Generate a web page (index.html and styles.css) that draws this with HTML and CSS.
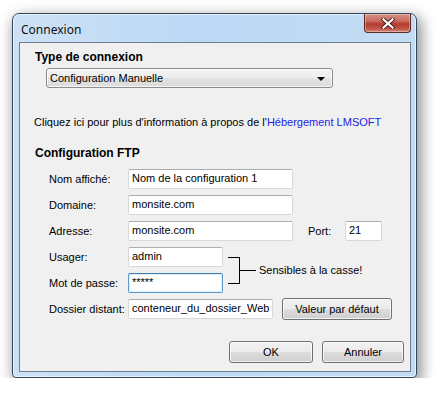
FILE: index.html
```html
<!DOCTYPE html>
<html>
<head>
<meta charset="utf-8">
<link rel="stylesheet" href="styles.css">
</head>
<body>
<div class="window">
  <div class="titlebar">
    <span class="title">Connexion</span>
    <div class="close">
      <svg width="14" height="11" viewBox="0 0 14 11">
        <path d="M2.5 1.5 L11.5 9.5 M11.5 1.5 L2.5 9.5" stroke="#4a1c18" stroke-width="4" stroke-linecap="square" fill="none"/>
        <path d="M2.5 1.5 L11.5 9.5 M11.5 1.5 L2.5 9.5" stroke="#ffffff" stroke-width="2.2" stroke-linecap="square" fill="none"/>
      </svg>
    </div>
  </div>
  <div class="client">
    <div class="heading h1">Type de connexion</div>
    <div class="select">
      <span>Configuration Manuelle</span>
      <span class="arrow"></span>
    </div>
    <p class="info">Cliquez ici pour plus d'information à propos de l'<a class="link">Hébergement LMSOFT</a></p>
    <div class="heading h2">Configuration FTP</div>
    <div class="form">
      <div class="row">
        <span class="label">Nom affiché:</span>
        <div class="input w165">Nom de la configuration 1</div>
      </div>
      <div class="row">
        <span class="label">Domaine:</span>
        <div class="input w165">monsite.com</div>
      </div>
      <div class="row">
        <span class="label">Adresse:</span>
        <div class="input w165">monsite.com</div>
        <span class="port-label">Port:</span>
        <div class="input w37">21</div>
      </div>
      <div class="cred">
        <div class="cred-rows">
          <div class="row">
            <span class="label">Usager:</span>
            <div class="input w95">admin</div>
          </div>
          <div class="row">
            <span class="label">Mot de passe:</span>
            <div class="input w95 focus">*****</div>
          </div>
        </div>
        <div class="bracket"></div>
        <div class="tick"></div>
        <span class="note">Sensibles à la casse!</span>
      </div>
      <div class="row">
        <span class="label">Dossier distant:</span>
        <div class="input w145">conteneur_du_dossier_Web</div>
        <div class="btn default">Valeur par défaut</div>
      </div>
    </div>
    <div class="actions">
      <div class="btn ok">OK</div>
      <div class="btn cancel">Annuler</div>
    </div>
  </div>
</div>
</body>
</html>
```

FILE: styles.css
```css
* { box-sizing: border-box; }
html, body { margin: 0; background: #ffffff; }
body {
  padding: 13px 0 0 12px;
  font-family: "Liberation Sans", Arial, sans-serif;
  font-size: 11px;
  color: #000;
}
.window {
  width: 405px;
  height: 365px;
  border: 1px solid #34465a;
  border-radius: 7px 7px 4px 4px;
  background: linear-gradient(to right, #cde1f5 0%, #bcd9f6 45%, #c3dcf4 100%);
  box-shadow: 3px 5px 14px 2px rgba(0,0,0,0.42), inset 0 0 0 1px rgba(255,255,255,0.6);
  padding: 0 5px 5px 6px;
  display: flex;
  flex-direction: column;
}
.titlebar {
  height: 28px;
  display: flex;
  justify-content: space-between;
  align-items: flex-start;
}
.title {
  font-family: "Noto Sans", "Open Sans", sans-serif;
  font-size: 12px;
  color: #101010;
  margin: 7px 0 0 2px;
}
.close {
  width: 47px;
  height: 19px;
  border: 1px solid #5b2a24;
  border-top: none;
  border-radius: 0 0 4px 4px;
  background: linear-gradient(to bottom, #d99088 0%, #c76a5e 40%, #b33b2c 55%, #c05446 80%, #d48478 100%);
  box-shadow: inset 0 0 0 1px rgba(255,255,255,0.35);
  display: flex;
  align-items: center;
  justify-content: center;
}
.close svg { display: block; margin-top: 1px; }
.client {
  flex: 1;
  border: 1px solid #6f7f90;
  background: #f0f0f0;
  padding: 0 6px 8px 0;
  display: flex;
  flex-direction: column;
}
.heading {
  font-weight: bold;
  font-size: 12px;
  line-height: 15px;
  margin-left: 15px;
}
.h1 { margin-top: 7px; }
.select {
  margin: 3px 0 0 26px;
  width: 287px;
  height: 20px;
  border: 1px solid #8c8c8c;
  border-radius: 3px;
  background: linear-gradient(to bottom, #f4f4f4 0%, #ececec 50%, #e2e2e2 51%, #dcdcdc 100%);
  box-shadow: inset 0 0 0 1px rgba(255,255,255,0.7);
  display: flex;
  align-items: center;
  justify-content: space-between;
  padding: 0 7px 0 3px;
  line-height: 13px;
}
.arrow {
  width: 0;
  height: 0;
  border-left: 4px solid transparent;
  border-right: 4px solid transparent;
  border-top: 4px solid #000;
  margin-top: 1px;
}
.info {
  margin: 28px 0 0 14px;
  line-height: 13px;
}
.link { color: #2323e6; }
.h2 { margin-top: 17px; margin-left: 15px; }
.form {
  margin: 8px 0 0 29px;
  display: flex;
  flex-direction: column;
  gap: 6px;
}
.row {
  display: flex;
  align-items: center;
  height: 20px;
}
.label { width: 79px; line-height: 13px; padding-top: 1px; }
.input {
  height: 20px;
  background: #fff;
  border: 1px solid #d5d8dd;
  border-top-color: #abadb3;
  border-radius: 2px;
  padding: 0 3px;
  line-height: 17px;
  white-space: nowrap;
  overflow: hidden;
}
.input.focus {
  border-color: #569ad1;
  border-top-color: #3d7bad;
  box-shadow: inset 0 0 0 1px #e3f0fb;
}
.w165 { width: 165px; }
.w145 { width: 145px; }
.w95 { width: 95px; }
.w37 { width: 37px; }
.port-label { margin-left: 15px; width: 37px; }
.cred {
  display: flex;
  align-items: center;
}
.cred-rows {
  display: flex;
  flex-direction: column;
  gap: 6px;
}
.bracket {
  margin-left: 5px;
  width: 12px;
  height: 27px;
  border: 1px solid #000;
  border-left: none;
}
.tick {
  width: 16px;
  height: 1px;
  background: #000;
}
.note { margin-left: 3px; }
.btn {
  border: 1px solid #707070;
  border-radius: 3px;
  background: linear-gradient(to bottom, #f2f2f2 0%, #ebebeb 50%, #dddddd 51%, #cfcfcf 100%);
  box-shadow: inset 0 0 0 1px rgba(255,255,255,0.75);
  display: flex;
  align-items: center;
  justify-content: center;
  line-height: 13px;
}
.default {
  margin-left: 9px;
  width: 110px;
  height: 22px;
}
.actions {
  margin-top: auto;
  display: flex;
  justify-content: flex-end;
  gap: 9px;
}
.ok { width: 84px; height: 22px; }
.cancel { width: 82px; height: 22px; }
```
